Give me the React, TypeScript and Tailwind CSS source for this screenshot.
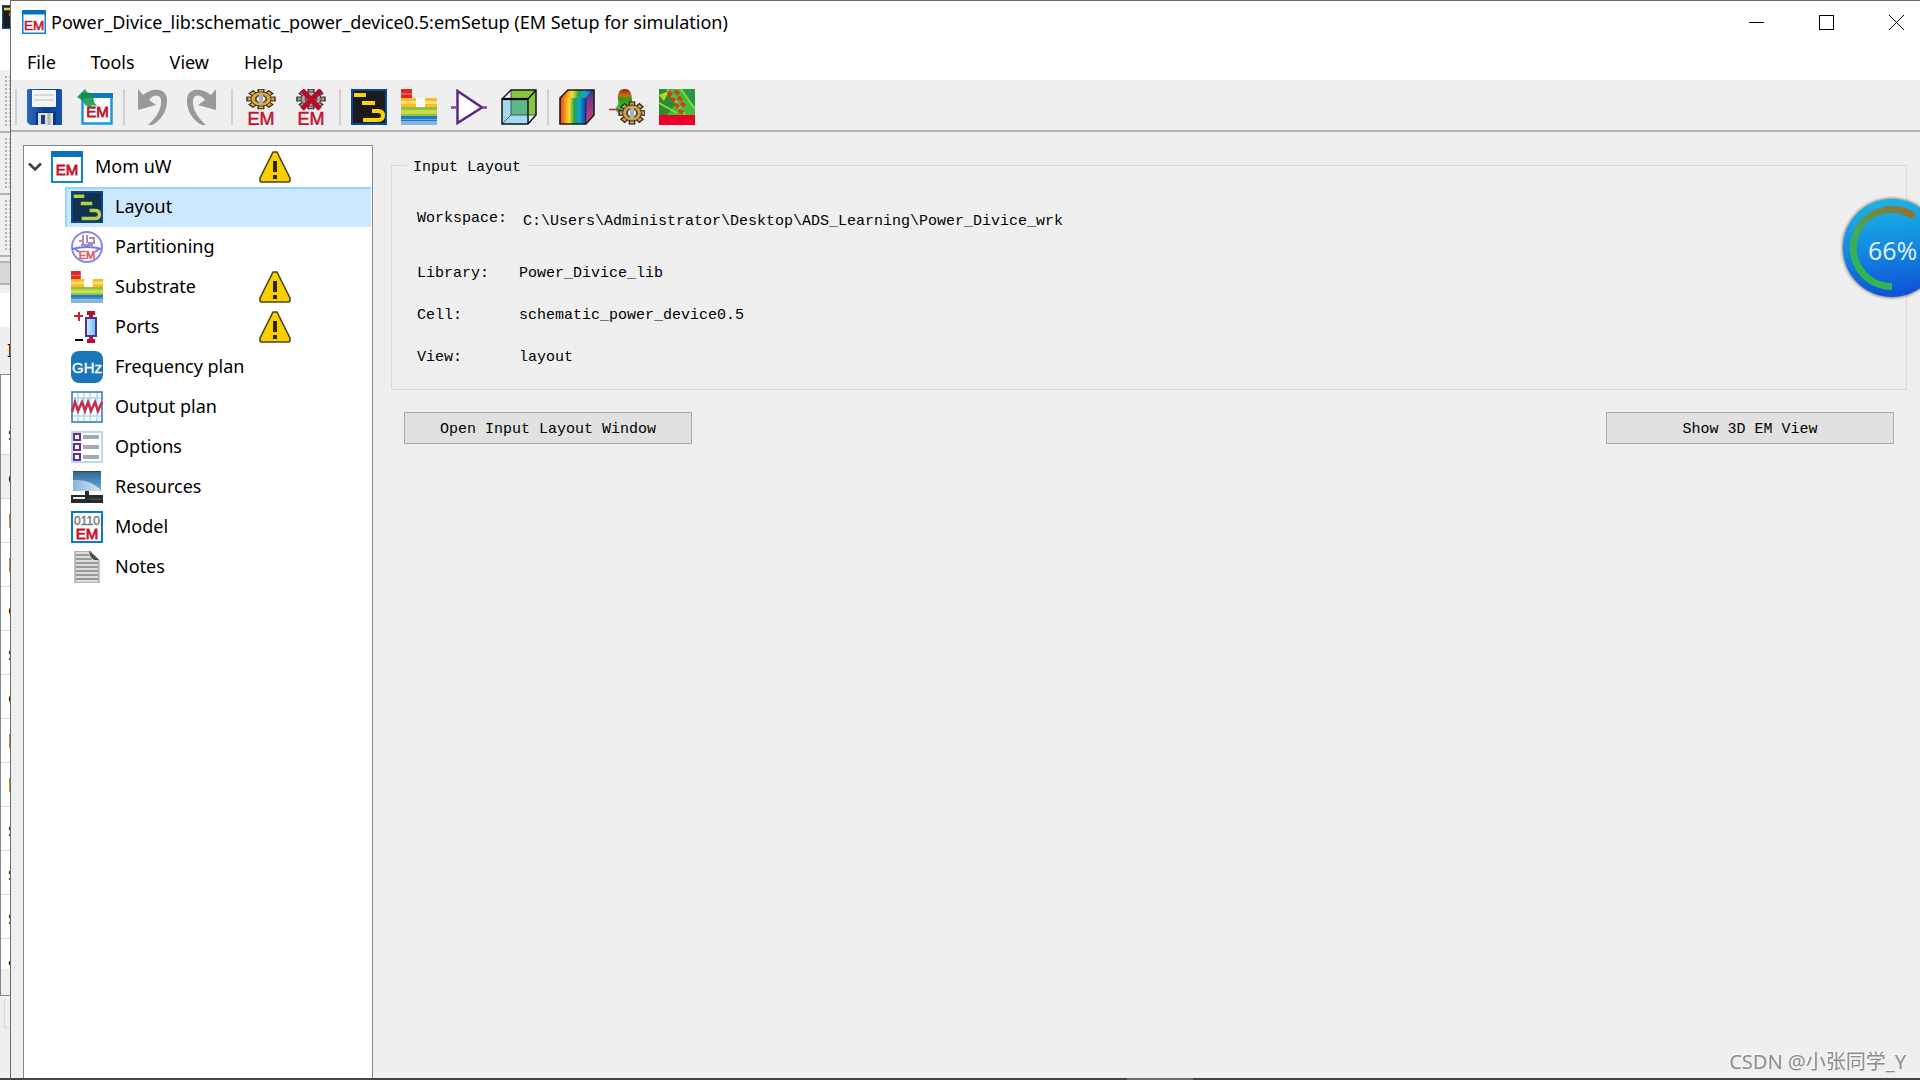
import React from "react";

const emFont = '"Liberation Sans", Arial, sans-serif';

function Em({ x, y, size, color = "#c41230", width }: { x: number; y: number; size: number; color?: string; width?: number }) {
  return (
    <text x={x} y={y} fontSize={size} fill={color} stroke={color} strokeWidth={width ?? 0.5} textAnchor="middle" fontFamily={emFont}>
      EM
    </text>
  );
}

function Svg({ box = 36, className = "size-9", children }: { box?: number; className?: string; children: React.ReactNode }) {
  return (
    <svg viewBox={`0 0 ${box} ${box}`} className={`${className} block shrink-0`} aria-hidden="true">
      {children}
    </svg>
  );
}

const EmWindow = ({ className, size = 15 }: { className: string; size?: number }) => (
  <Svg box={32} className={className}>
    <rect x="1" y="1" width="30" height="30" fill="#fff" stroke="#0a84dc" strokeWidth="2" />
    <rect width="32" height="6" fill="#0870bd" />
    <Em x={16} y={size > 15 ? 26 : 24} size={size} width={0.8} />
  </Svg>
);

const SaveIcon = () => (
  <Svg>
    <defs>
      <linearGradient id="disk" x1="0" x2="1">
        <stop offset="0" stopColor="#2f6ab8" />
        <stop offset=".5" stopColor="#0b3f98" />
        <stop offset="1" stopColor="#1552ae" />
      </linearGradient>
    </defs>
    <path d="M1 0H34L35 1V36H3L0 33V1Z" fill="url(#disk)" />
    <path d="M5 1H29V17Q29 18 28 18H6Q5 18 5 17Z" fill="#f4f4f4" />
    <path d="M7 6H27M7 11H27" stroke="#d0d0d0" strokeWidth="1.5" />
    <rect x="9" y="23" width="20" height="13" fill="#0b3580" />
    <rect x="11" y="24" width="15" height="12" fill="#dedede" />
    <rect x="14" y="26" width="4" height="9" fill="#1f3f80" />
    <path d="M22 24V36" stroke="#b5b5b5" strokeWidth="3" />
  </Svg>
);

const NewEmIcon = () => (
  <Svg>
    <rect x="5.500" y="5.500" width="29" height="29" fill="#fff" stroke="#1e96e8" strokeWidth="2.500" />
    <rect x="4" y="4" width="32" height="5" fill="#0c79c4" />
    <Em x={20.5} y={28} size={15} width={0.8} />
    <path d="M0 8L8 0L10 3L16 5L17 13L20 17L14 16L18 21L8 16L6 12Z" fill="#0a9045" opacity=".85" />
  </Svg>
);

const UndoIcon = ({ flip = false }: { flip?: boolean }) => (
  <Svg>
    <g transform={flip ? "translate(34 0) scale(-1 1)" : undefined} fill="#999">
      <path d="M3 0L8 6C18-2 31-1 32 10C33 23 24 33 17 36H13C21 29 27 20 26 11C25 4 17 6 14 11L21 16L3 21Z" />
    </g>
  </Svg>
);

function Gear({ cx, cy, r, squash = 1, fill }: { cx: number; cy: number; r: number; squash?: number; fill: string }) {
  return (
    <g transform={`translate(${cx} ${cy}) scale(1 ${squash})`}>
      {[0, 45, 90, 135, 180, 225, 270, 315].map((a) => (
        <rect key={a} x={-r * 0.2} y={-r} width={r * 0.4} height={r * 0.5} fill={fill} stroke="#33291a" strokeWidth="1.400" transform={`rotate(${a})`} />
      ))}
      <circle r={r * 0.72} fill={fill} stroke="#33291a" strokeWidth="1" />
      <circle r={r * 0.66} fill={fill} />
      <circle r={r * 0.38} fill="#eee" stroke="#444" strokeWidth="1.800" />
      <rect x="-2" y={-r * 0.5} width="4" height={r} fill="#b0b0b0" />
    </g>
  );
}

const GearEmIcon = () => (
  <Svg>
    <Gear cx={18} cy={10} r={14} squash={0.7} fill="#dfa640" />
    <Em x={18} y={36} size={18} />
  </Svg>
);

const StopEmIcon = () => (
  <Svg>
    <Gear cx={18} cy={10} r={14} squash={0.7} fill="#a3a3a3" />
    <path d="M9 1L27 20M28 1L9 20" stroke="#b80a2c" strokeWidth="5" />
    <Em x={18} y={36} size={18} />
  </Svg>
);

const LayoutIcon = ({ className = "size-9", dark = false }: { className?: string; dark?: boolean }) => (
  <Svg className={className}>
    <rect x="1" y="1" width="34" height="34" fill={dark ? "#12304f" : "#1c1a1b"} stroke="#07499b" strokeWidth="2" />
    <g fill="none" stroke={dark ? "#b5d343" : "#fcd20b"} strokeWidth="4">
      <path d="M3 6H15M11 14H24M21 22H27Q32 22 32 26.500Q32 31 27 31H12" />
    </g>
  </Svg>
);

const SubstrateIcon = ({ className = "size-9" }: { className?: string }) => (
  <Svg className={className}>
    <path d="M0 0H11V9H0Z" fill="#df2528" />
    <path d="M0 4H11V6H0Z" fill="#ef5a50" />
    <path d="M0 9H15V18H0ZM24 9H36V18H24Z" fill="#fdbb22" />
    <path d="M0 12H15V15H0ZM24 12H36V15H24Z" fill="#fedc7c" />
    <rect x="15" y="9" width="9" height="9" fill="#fff" />
    <rect y="18" width="36" height="9" fill="#8fc33f" />
    <rect y="21" width="36" height="4" fill="#cbdc52" />
    <rect y="27" width="36" height="5" fill="#1c7cc2" />
    <rect y="32" width="36" height="4" fill="#8cb3de" />
    <rect y="30" width="36" height="1" fill="#69a9dc" />
  </Svg>
);

const SymbolIcon = () => (
  <Svg>
    <path d="M6.500 2V34L31 18.500Z" fill="#fff" stroke="#5b2885" strokeWidth="2.500" />
    <path d="M0 18.500H6M31 18.500H36" stroke="#7b4aa0" strokeWidth="2.500" />
  </Svg>
);

const CubeIcon = () => (
  <Svg>
    <path d="M10 1H35V26L27 35H1V10Z" fill="#f2f2f2" />
    <path d="M10 1H35V26H10Z" fill="#88c540" />
    <path d="M1 10H27V35H1Z" fill="#a4daf1" />
    <path d="M10 10H27V26H10Z" fill="#5fb787" />
    <path d="M10 1V26H35M10 26L1 35" fill="none" stroke="#3a5a55" strokeWidth="1" />
    <path d="M10 1H35V26L27 35H1V10ZM27 10V35M27 10L35 1" fill="none" stroke="#151515" strokeWidth="1.500" />
    <path d="M1 10H27" stroke="#000" strokeWidth="2.200" />
  </Svg>
);

const RainbowIcon = () => (
  <Svg>
    <defs>
      <linearGradient id="spectrum" x1="0" x2="1">
        <stop offset="0" stopColor="#e8371e" />
        <stop offset=".22" stopColor="#f9a11b" />
        <stop offset=".36" stopColor="#f4e12b" />
        <stop offset=".55" stopColor="#22a24a" />
        <stop offset=".75" stopColor="#11a4dc" />
        <stop offset="1" stopColor="#123a92" />
      </linearGradient>
      <linearGradient id="spectrumSide" x1="0" y1="0" x2="0" y2="1">
        <stop offset="0" stopColor="#493591" />
        <stop offset="1" stopColor="#e23a82" />
      </linearGradient>
    </defs>
    <path d="M1 9L9 1H35L27 9Z" fill="url(#spectrum)" />
    <path d="M1 9H27V35H1Z" fill="url(#spectrum)" />
    <path d="M27 9L35 1V26L27 35Z" fill="url(#spectrumSide)" />
    <path d="M1 9L9 1H35V26L27 35H1Z" fill="none" stroke="#1b1b1b" strokeWidth="1.600" />
    <path d="M27 9V35M27 9L35 1" fill="none" stroke="#1b1b1b" strokeWidth="1" opacity=".6" />
  </Svg>
);

const FarFieldIcon = () => (
  <Svg>
    <defs>
      <linearGradient id="lobe" x1="0" y1="0" x2="0" y2="1">
        <stop offset="0" stopColor="#a51414" />
        <stop offset=".25" stopColor="#c0700e" />
        <stop offset=".42" stopColor="#2f9a12" />
        <stop offset="1" stopColor="#35e565" />
      </linearGradient>
    </defs>
    <path d="M16 0C22 0 23 6 23 12C25 18 20 23 16 24C9 26 4 22 8 17C11 14 8 10 9 6C10 2 12 0 16 0Z" fill="url(#lobe)" />
    <path d="M0 20.500H12" stroke="#d2223a" strokeWidth="1.500" />
    <Gear cx={23} cy={24} r={13} squash={0.85} fill="#d0a04c" />
  </Svg>
);

const FieldPlotIcon = () => (
  <Svg>
    <rect width="36" height="27" fill="#3fbd3b" />
    <path d="M0 0H10L16 16L8 26H0Z" fill="#2c8c36" />
    <path d="M0 6L10 2L5 12Z" fill="#c2d32a" />
    <path d="M22 0H36V18L26 8Z" fill="#279645" />
    <path d="M8 0L26 26M22 0L36 20M0 14L18 24" stroke="#8fdd35" strokeWidth="1.800" />
    <path d="M9 3L13 6M16 2L20 5M12 9L16 12M19 8L23 11M16 15L20 18M22 14L26 17M20 21L24 24" stroke="#e6311f" strokeWidth="3.500" />
    <rect y="26" width="36" height="10" fill="#ea0029" />
  </Svg>
);

const WarningIcon = () => (
  <Svg box={32} className="size-8">
    <path d="M14 1H18L31 27V30L30 31H2L1 30V27Z" fill="#f7ce00" stroke="#4a431c" strokeWidth="1.600" strokeLinejoin="round" />
    <rect x="14" y="10" width="4" height="11" fill="#2b2615" />
    <rect x="14" y="24" width="4" height="4" fill="#2b2615" />
  </Svg>
);

const PartitionIcon = () => (
  <Svg box={32} className="size-8">
    <circle cx="16" cy="16" r="15" fill="#fff" stroke="#8286f2" strokeWidth="2" />
    <path d="M1 18Q16 14 31 18M4 18L8 21M28 18L24 21" fill="none" stroke="#7478ee" strokeWidth="2" />
    <path d="M8 10H13M12 4V14M16 4V12M18 7H23V12H17M10 14H22" fill="none" stroke="#a68ac0" strokeWidth="2" />
    <Em x={16} y={28} size={11} color="#e06068" width={0.7} />
  </Svg>
);

const PortsIcon = () => (
  <Svg box={32} className="size-8">
    <defs>
      <linearGradient id="port" x1="0" x2="1">
        <stop offset="0" stopColor="#d8f3fd" />
        <stop offset="1" stopColor="#62bff0" />
      </linearGradient>
    </defs>
    <path d="M8 1V10M3 5H12" stroke="#cf1d3c" strokeWidth="2" />
    <path d="M4 29H12" stroke="#000" strokeWidth="2" />
    <path d="M16 0H24V4H22V6H18V4H16ZM18 26H22V28H24V32H16V28H18Z" fill="#bd0e30" />
    <rect x="15" y="7" width="10" height="18" fill="url(#port)" stroke="#55318c" strokeWidth="2" />
  </Svg>
);

const GhzIcon = () => (
  <Svg box={32} className="size-8">
    <rect width="32" height="32" rx="8" fill="#1b75bb" />
    <text x="16" y="22" fontSize="15" fill="#fff" stroke="#fff" strokeWidth=".4" textAnchor="middle" fontFamily={emFont}>
      GHz
    </text>
  </Svg>
);

const OutputIcon = () => (
  <Svg box={32} className="size-8">
    <rect x="1" y="1" width="30" height="30" fill="#fff" stroke="#3d7abb" strokeWidth="1.600" />
    <path d="M7 2V30M13 2V30M19 2V30M26 2V30M2 7H30M2 25H30" stroke="#a9d9f3" strokeWidth="1.500" />
    <path d="M1 21L4 11L7 20L11 11L14 20L17 11L20 20L24 11L27 20L31 11" fill="none" stroke="#c2304c" strokeWidth="2.600" />
  </Svg>
);

const OptionsIcon = () => (
  <Svg box={32} className="size-8">
    <rect x="1" y="1" width="30" height="30" fill="#fff" stroke="#bfd9ec" strokeWidth="2" />
    <path d="M3 3H9V9H3ZM3 13H9V19H3ZM3 23H9V29H3Z" fill="#fff" stroke="#652d90" strokeWidth="2" />
    <path d="M12 6H28M12 16H28M12 26H28" stroke="#a6a8ab" strokeWidth="4" />
  </Svg>
);

const ResourcesIcon = () => (
  <Svg box={32} className="size-8">
    <defs>
      <linearGradient id="screen" x1="0" y1="0" x2="0" y2="1">
        <stop offset="0" stopColor="#2c6490" />
        <stop offset="1" stopColor="#6fb2df" />
      </linearGradient>
      <linearGradient id="glare" x1="0" x2="1">
        <stop offset="0" stopColor="#86b9de" />
        <stop offset="1" stopColor="#d3e4f2" />
      </linearGradient>
    </defs>
    <rect x="2" width="28" height="20" fill="url(#screen)" />
    <path d="M2 9Q18 8 29 18V20H2Z" fill="url(#glare)" />
    <path d="M2 .5H30" stroke="#2f4a60" />
    <path d="M14 20H18V24H32V32H0V24H14Z" fill="#2b2a2a" />
    <rect x="2" y="26" width="12" height="2" fill="#f4f4f4" />
    <path d="M18 28H30" stroke="#5a5a5a" strokeWidth="1" />
  </Svg>
);

const ModelIcon = () => (
  <Svg box={32} className="size-8">
    <rect x="1" y="1" width="30" height="30" fill="#fff" stroke="#0a7acb" strokeWidth="2" />
    <text x="16" y="14" fontSize="12" fill="#777" stroke="#777" strokeWidth=".4" textAnchor="middle" fontFamily={emFont}>
      0110
    </text>
    <Em x={16} y={28} size={15} width={0.8} />
  </Svg>
);

const NotesIcon = () => (
  <Svg box={32} className="size-8">
    <path d="M4 0H19L28 9V32H4Z" fill="#dcdcdc" stroke="#8a8a8a" strokeWidth="1" />
    <path d="M5 4H18M5 8H21M5 12H27M5 16H27M5 20H27M5 24H27M5 28H27" stroke="#999" strokeWidth="1.800" />
    <path d="M18 0L28 9H23L19 5Z" fill="#4a4a4a" />
  </Svg>
);

const toolGroups: { label: string; icon: React.ReactNode }[][] = [
  [
    { label: "Save", icon: <SaveIcon /> },
    { label: "New EM setup", icon: <NewEmIcon /> },
  ],
  [
    { label: "Undo", icon: <UndoIcon /> },
    { label: "Redo", icon: <UndoIcon flip /> },
  ],
  [
    { label: "Simulate", icon: <GearEmIcon /> },
    { label: "Stop simulation", icon: <StopEmIcon /> },
  ],
  [
    { label: "Layout", icon: <LayoutIcon /> },
    { label: "Substrate", icon: <SubstrateIcon /> },
    { label: "Symbol", icon: <SymbolIcon /> },
    { label: "3D view", icon: <CubeIcon /> },
  ],
  [
    { label: "Visualization", icon: <RainbowIcon /> },
    { label: "Far field", icon: <FarFieldIcon /> },
    { label: "Field plot", icon: <FieldPlotIcon /> },
  ],
];

const treeItems: { label: string; icon: React.ReactNode; warn?: boolean; selected?: boolean }[] = [
  { label: "Layout", icon: <LayoutIcon className="size-8" dark />, selected: true },
  { label: "Partitioning", icon: <PartitionIcon /> },
  { label: "Substrate", icon: <SubstrateIcon className="size-8" />, warn: true },
  { label: "Ports", icon: <PortsIcon />, warn: true },
  { label: "Frequency plan", icon: <GhzIcon /> },
  { label: "Output plan", icon: <OutputIcon /> },
  { label: "Options", icon: <OptionsIcon /> },
  { label: "Resources", icon: <ResourcesIcon /> },
  { label: "Model", icon: <ModelIcon /> },
  { label: "Notes", icon: <NotesIcon /> },
];

const details = [
  { label: "Library:", value: "Power_Divice_lib" },
  { label: "Cell:", value: "schematic_power_device0.5" },
  { label: "View:", value: "layout" },
];

const backgroundRows = ["s", "c", "l", "l", "c", "s", "c", "l", "l", "s", "s", "s"];

function Grip() {
  return (
    <div className="h-[62px] shrink-0 border-b-2 border-[#b4b4b4] pt-1 pl-1">
      <div className="h-[52px] bg-[radial-gradient(#b8b8b8_1px,transparent_1px)] bg-[size:4px_4px]" />
    </div>
  );
}

function BackgroundWindow() {
  return (
    <div className="flex w-[10px] shrink-0 flex-col overflow-hidden bg-[#efefef] text-[18px] leading-5 text-black" aria-hidden="true">
      <div className="h-[71px] shrink-0 border-b border-[#eee] bg-white pt-[5px] pl-[2px]">
        <LayoutIcon className="size-6" />
      </div>
      <Grip />
      <Grip />
      <Grip />
      <div className="my-1 h-6 shrink-0 border-y-2 border-[#b4b4b4] bg-[#d8d8d8]" />
      <div className="mt-1 h-[34px] shrink-0 bg-white" />
      <div className="h-[47px] shrink-0 pt-[13px] pl-[7px]">I</div>
      <div className="flex shrink-0 flex-col border-y border-l border-[#828790] bg-white pt-9">
        {backgroundRows.map((c, i) => (
          <div key={i} className={`flex h-11 items-center border-b border-[#d8d8d8] pl-[7px] ${i === 1 ? "bg-[#efefef]" : ""}`}>
            {c}
          </div>
        ))}
        <div className="flex h-[30px] items-end pl-[7px]">a</div>
        <div className="h-[26px] bg-[#efefef]" />
      </div>
      <div className="mt-1 ml-1 h-7 shrink-0 border-b border-l border-[#dadada]" />
    </div>
  );
}

function Tree() {
  return (
    <nav className="w-[350px] shrink-0 border border-b-0 border-[#828790] bg-white pt-px text-[18px]" aria-label="EM setup">
      <div className="flex h-10 items-center">
        <button type="button" aria-label="Collapse" className="flex w-[27px] justify-start pl-1">
          <svg viewBox="0 0 14 10" className="h-[10px] w-[14px]" aria-hidden="true">
            <path d="M1 1.500L7 7.500L13 1.500" fill="none" stroke="#404040" strokeWidth="2.600" />
          </svg>
        </button>
        <EmWindow className="size-8" />
        <span className="w-[176px] pb-[2px] pl-3">Mom uW</span>
        <WarningIcon />
      </div>
      <ul className="pr-px pl-[41px]">
        {treeItems.map((t) => (
          <li key={t.label}>
            <button
              type="button"
              className={`flex h-10 w-full items-center border-l-2 pl-1 text-left ${t.selected ? "border-t-2 border-[#99d1ff] bg-[#cce8ff] pb-[2px]" : "border-transparent"}`}
            >
              {t.icon}
              <span className="w-[156px] pb-[2px] pl-3">{t.label}</span>
              {t.warn && <WarningIcon />}
            </button>
          </li>
        ))}
      </ul>
    </nav>
  );
}

function ProgressBubble() {
  return (
    <div className="absolute top-[196px] -right-6 size-[104px]" role="status">
      <svg viewBox="0 0 104 104" className="size-[104px]" aria-hidden="true">
        <defs>
          <linearGradient id="bubble" x1="0" y1="0" x2="0.100" y2="1">
            <stop offset="0" stopColor="#1cb8e8" />
            <stop offset=".5" stopColor="#148ddf" />
            <stop offset="1" stopColor="#0f55d8" />
          </linearGradient>
          <linearGradient id="arc" x1="0.900" y1="0" x2="0.300" y2="1">
            <stop offset="0" stopColor="#977030" />
            <stop offset=".6" stopColor="#3fab5c" />
            <stop offset="1" stopColor="#2cb951" />
          </linearGradient>
          <filter id="halo" x="-10%" y="-10%" width="120%" height="120%">
            <feGaussianBlur stdDeviation="1.500" />
          </filter>
        </defs>
        <circle cx="52" cy="52" r="50" fill="#555" opacity=".7" filter="url(#halo)" />
        <circle cx="52" cy="52" r="49" fill="url(#bubble)" />
        <path d="M52 90.500A38.500 38.500 0 1 1 74 20.500" fill="none" stroke="url(#arc)" strokeWidth="7" />
      </svg>
      <span className="absolute top-[38px] left-7 text-[25px] leading-8 text-[#d9ecfb]">66%</span>
    </div>
  );
}

export default function App() {
  return (
    <div className="relative flex h-screen flex-col overflow-hidden bg-[#efefef] font-['Noto_Sans','Noto_Sans_CJK_SC',sans-serif] text-black">
      <div className="flex min-h-0 flex-1">
        <BackgroundWindow />
        <div className="flex min-w-0 flex-1 flex-col border-t border-l border-[#6b6b6b]">
          <header className="bg-white">
            <div className="flex h-[42px] items-center pr-4 pl-[11px]">
              <EmWindow className="size-6" size={18} />
              <h1 className="flex-1 pl-[5px] text-[18px]">Power_Divice_lib:schematic_power_device0.5:emSetup (EM Setup for simulation)</h1>
              <div className="flex gap-[55px]">
                <button type="button" aria-label="Minimize">
                  <svg viewBox="0 0 15 15" className="size-[15px]" shapeRendering="crispEdges">
                    <path d="M0 7.500H15" stroke="#000" />
                  </svg>
                </button>
                <button type="button" aria-label="Maximize">
                  <svg viewBox="0 0 15 15" className="size-[15px]">
                    <rect x=".5" y=".5" width="14" height="14" fill="none" stroke="#000" />
                  </svg>
                </button>
                <button type="button" aria-label="Close">
                  <svg viewBox="0 0 15 15" className="size-[15px]">
                    <path d="M0 0L15 15M15 0L0 15" stroke="#000" />
                  </svg>
                </button>
              </div>
            </div>
            <nav className="flex h-[37px] items-center gap-[35px] pt-[2px] pl-4 text-[18px]" aria-label="Menu bar">
              {["File", "Tools", "View", "Help"].map((m) => (
                <button type="button" key={m}>
                  {m}
                </button>
              ))}
            </nav>
          </header>
          <div className="mb-px border-t border-[#ececec]" />
          <div className="flex items-center border-b-2 border-[#b6b6b6] pt-[7px] pb-[5px] pl-1" role="toolbar" aria-label="Tools">
            {toolGroups.map((group, i) => (
              <div key={i} className="flex items-center">
                <span className="mr-[10px] h-9 w-[2px] bg-[#d0d0d0]" />
                <div className="mr-[10px] flex gap-[14px]">
                  {group.map((t) => (
                    <button type="button" key={t.label} aria-label={t.label}>
                      {t.icon}
                    </button>
                  ))}
                </div>
              </div>
            ))}
          </div>
          <div className="flex min-h-0 flex-1 pt-[13px] pl-3">
            <Tree />
            <main className="flex min-w-0 flex-1 flex-col pt-[6px] pr-[13px] pl-[18px] font-['Liberation_Mono',monospace] text-[15px] leading-[22px]">
              <fieldset className="min-w-0 border border-[#dadada] px-[25px] pb-5">
                <legend className="-ml-[10px] px-[6px] pt-[6px]">Input Layout</legend>
                <dl className="grid grid-cols-[102px_1fr] gap-y-5 pt-[29px]">
                  <dt className="pb-3">Workspace:</dt>
                  <dd className="pt-[3px] pb-[10px] pl-1">C:\Users\Administrator\Desktop\ADS_Learning\Power_Divice_wrk</dd>
                  {details.map((d) => (
                    <React.Fragment key={d.label}>
                      <dt>{d.label}</dt>
                      <dd>{d.value}</dd>
                    </React.Fragment>
                  ))}
                </dl>
              </fieldset>
              <div className="flex justify-between pt-[22px] pr-[13px] pl-[13px]">
                <button type="button" className="h-8 w-72 border border-[#adadad] bg-[#e1e1e1] pt-[3px]">
                  Open Input Layout Window
                </button>
                <button type="button" className="h-8 w-72 border border-[#adadad] bg-[#e1e1e1] pt-[3px]">
                  Show 3D EM View
                </button>
              </div>
            </main>
          </div>
        </div>
      </div>
      <footer className="h-[2px] shrink-0 bg-[#454545]">
        <div className="mx-auto h-full w-[66px] translate-x-[200px] bg-[#6b6b6b]" />
      </footer>
      <ProgressBubble />
      <p className="absolute right-[14px] bottom-[2px] text-[20px] leading-8 text-[#8c8c8c] [text-shadow:-1px_-1px_0_#fff]">CSDN @小张同学_Y</p>
    </div>
  );
}
